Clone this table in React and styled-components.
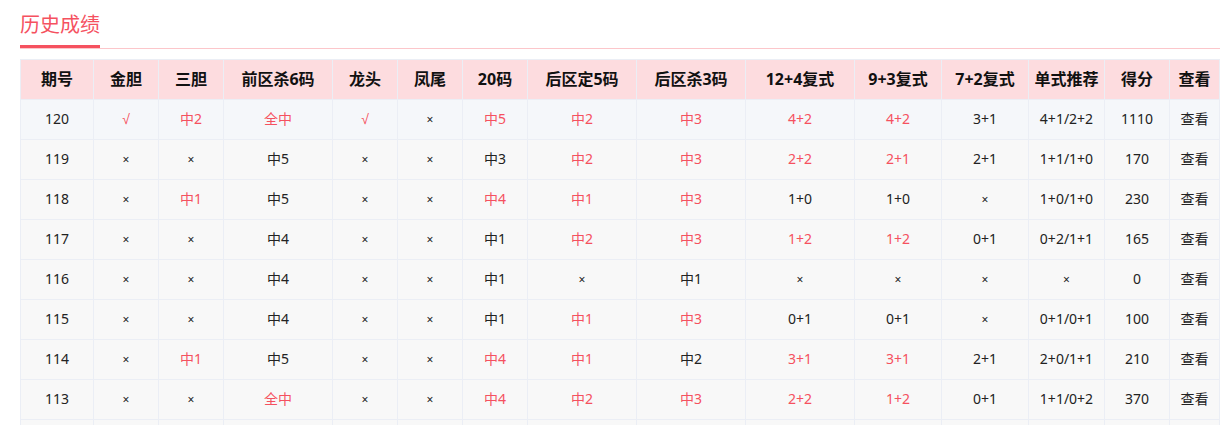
import React from "react"
import styled, { createGlobalStyle } from "styled-components"

const columns = [
  { title: "期号", width: 73 },
  { title: "金胆", width: 65 },
  { title: "三胆", width: 65 },
  { title: "前区杀6码", width: 109 },
  { title: "龙头", width: 65 },
  { title: "凤尾", width: 65 },
  { title: "20码", width: 65 },
  { title: "后区定5码", width: 109 },
  { title: "后区杀3码", width: 109 },
  { title: "12+4复式", width: 109 },
  { title: "9+3复式", width: 87 },
  { title: "7+2复式", width: 87 },
  { title: "单式推荐", width: 76 },
  { title: "得分", width: 65 },
  { title: "查看", width: 50 },
]

// "*" marks a hit, shown in red
const rows = [
  ["120", "*√", "*中2", "*全中", "*√", "×", "*中5", "*中2", "*中3", "*4+2", "*4+2", "3+1", "4+1/2+2", "1110"],
  ["119", "×", "×", "中5", "×", "×", "中3", "*中2", "*中3", "*2+2", "*2+1", "2+1", "1+1/1+0", "170"],
  ["118", "×", "*中1", "中5", "×", "×", "*中4", "*中1", "*中3", "1+0", "1+0", "×", "1+0/1+0", "230"],
  ["117", "×", "×", "中4", "×", "×", "中1", "*中2", "*中3", "*1+2", "*1+2", "0+1", "0+2/1+1", "165"],
  ["116", "×", "×", "中4", "×", "×", "中1", "×", "中1", "×", "×", "×", "×", "0"],
  ["115", "×", "×", "中4", "×", "×", "中1", "*中1", "*中3", "0+1", "0+1", "×", "0+1/0+1", "100"],
  ["114", "×", "*中1", "中5", "×", "×", "*中4", "*中1", "中2", "*3+1", "*3+1", "2+1", "2+0/1+1", "210"],
  ["113", "×", "×", "*全中", "×", "×", "*中4", "*中2", "*中3", "*2+2", "*1+2", "0+1", "1+1/0+2", "370"],
  ["112", "×", "×", "中5", "×", "×", "中2", "*中1", "中1", "1+0", "1+0", "×", "0+1/1+0", "90"],
]

const GlobalStyle = createGlobalStyle`
  body {
    margin: 0;
    background: #ffffff;
    font-family: "Noto Sans", "Noto Sans CJK SC", sans-serif;
    color: #222;
  }
`

const Page = styled.div`
  padding: 0 6px 0 20px;
`

const Head = styled.div`
  border-bottom: 1px solid #fcc6ca;
`

const Title = styled.h2`
  display: inline-block;
  margin: 0;
  padding: 10px 0 7px;
  font-family: "Noto Sans CJK SC", sans-serif;
  font-size: 20px;
  line-height: 28px;
  font-weight: 400;
  color: #f5515f;
  border-bottom: 3px solid #f5515f;
`

const Table = styled.table`
  margin-top: 10px;
  width: 1200px;
  table-layout: fixed;
  border-collapse: collapse;
  border: 1px solid #ebeef5;
`

const Th = styled.th`
  height: 38px;
  padding: 0 0 1px;
  background: #fddcdf;
  border: 1px solid #ebeef5;
  font-size: 16px;
  line-height: 20px;
  font-weight: 700;
  color: #111;
  text-align: center;
  white-space: nowrap;
`

const Row = styled.tr`
  background: ${(p) => (p.$first ? "#f5f7fa" : "#f8f8f8")};
`

const Td = styled.td`
  height: 38px;
  padding: 0 0 1px;
  border: 1px solid #ebeef5;
  font-size: 14px;
  line-height: 18px;
  text-align: center;
  white-space: nowrap;
  color: ${(p) => (p.$hit ? "#f5515f" : "#222")};
`

const Cross = styled.span`
  font-size: 12px;
`

const Tick = styled.span`
  font-family: "Liberation Sans", sans-serif;
  font-size: 14px;
`

function renderValue(text) {
  if (text === "×") return <Cross>×</Cross>
  if (text === "√") return <Tick>√</Tick>
  return text
}

export default function App() {
  return (
    <Page>
      <GlobalStyle />
      <Head>
        <Title>历史成绩</Title>
      </Head>
      <Table>
        <colgroup>
          {columns.map((c) => (
            <col key={c.title} style={{ width: c.width }} />
          ))}
        </colgroup>
        <thead>
          <tr>
            {columns.map((c) => (
              <Th key={c.title}>{c.title}</Th>
            ))}
          </tr>
        </thead>
        <tbody>
          {rows.map((r, i) => (
            <Row key={r[0]} $first={i === 0}>
              {r.map((v, j) => {
                const hit = v.startsWith("*")
                const text = hit ? v.slice(1) : v
                return (
                  <Td key={j} $hit={hit}>
                    {renderValue(text)}
                  </Td>
                )
              })}
              <Td>查看</Td>
            </Row>
          ))}
        </tbody>
      </Table>
    </Page>
  )
}
